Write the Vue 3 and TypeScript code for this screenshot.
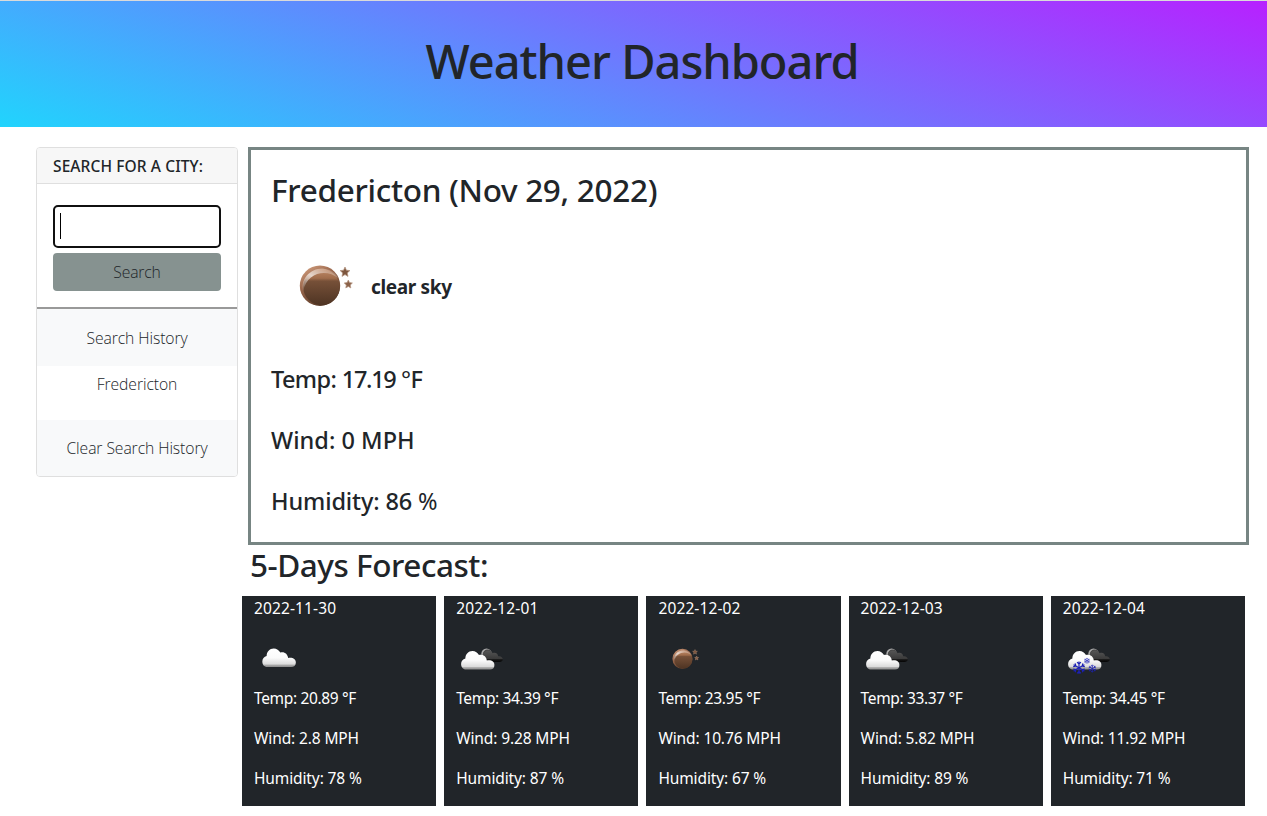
<script setup lang="ts">
import { ref } from 'vue'

type Icon = 'cloud' | 'clouds' | 'moon' | 'snow'
interface Day {
  date: string
  icon: Icon
  temp: string
  wind: string
  humidity: number
}

const city = ref('')
const history = ref<string[]>(['Fredericton'])
const days: Day[] = [
  { date: '2022-11-30', icon: 'cloud', temp: '20.89', wind: '2.8', humidity: 78 },
  { date: '2022-12-01', icon: 'clouds', temp: '34.39', wind: '9.28', humidity: 87 },
  { date: '2022-12-02', icon: 'moon', temp: '23.95', wind: '10.76', humidity: 67 },
  { date: '2022-12-03', icon: 'clouds', temp: '33.37', wind: '5.82', humidity: 89 },
  { date: '2022-12-04', icon: 'snow', temp: '34.45', wind: '11.92', humidity: 71 },
]
const arms = [0, 60, 120, 180, 240, 300]
const flakes = [
  [16, 31.8, 1],
  [24, 24.8, 0.46],
  [29.3, 32.6, 0.62],
]
</script>

<template>
  <svg class="defs" width="0" height="0" aria-hidden="true">
    <defs>
      <linearGradient id="moonFill" x1="0" y1="0" x2="0" y2="1">
        <stop offset="0" stop-color="#c08a68" />
        <stop offset="0.26" stop-color="#a06d4c" />
        <stop offset="0.34" stop-color="#765038" />
        <stop offset="1" stop-color="#4e3423" />
      </linearGradient>
      <linearGradient id="moonRim" x1="0" y1="0" x2="0.6" y2="1">
        <stop offset="0" stop-color="#dba887" />
        <stop offset="0.45" stop-color="#98654a" />
        <stop offset="1" stop-color="#553826" />
      </linearGradient>
      <linearGradient id="moonShine" x1="0" y1="1" x2="0.8" y2="0">
        <stop offset="0" stop-color="#fff" stop-opacity="0" />
        <stop offset="0.55" stop-color="#fff" stop-opacity="0.7" />
        <stop offset="1" stop-color="#fff" stop-opacity="0.1" />
      </linearGradient>
      <linearGradient id="cloudFill" x1="0" y1="0" x2="0" y2="1">
        <stop offset="0" stop-color="#fff" />
        <stop offset="0.5" stop-color="#fbfbfb" />
        <stop offset="0.84" stop-color="#dcdcdc" />
        <stop offset="0.9" stop-color="#a9a9a9" />
        <stop offset="1" stop-color="#8b8b8b" />
      </linearGradient>
      <linearGradient id="darkFill" x1="0" y1="0" x2="0" y2="1">
        <stop offset="0" stop-color="#555" />
        <stop offset="0.7" stop-color="#3b3b3b" />
        <stop offset="0.8" stop-color="#151515" />
        <stop offset="1" stop-color="#050505" />
      </linearGradient>
      <symbol id="moon" viewBox="0 0 100 100">
        <circle cx="49" cy="45.7" r="20.2" fill="url(#moonRim)" />
        <circle cx="50.4" cy="47" r="18.2" fill="url(#moonFill)" />
        <path d="M32 52C29 39 40 27.5 53 28.7C61 29.5 65.5 34 67 38C57 29.5 36 30.5 32 52Z" fill="url(#moonShine)" />
        <path d="M74 27l1.4 3.2 3.5.4-2.6 2.3.7 3.5-3-1.8-3 1.8.7-3.5-2.6-2.3 3.5-.4z" fill="#7d563e" stroke="#b2927e" stroke-width=".7" />
        <path d="M77.3 40l1.2 2.6 2.9.4-2.1 2 .5 2.9-2.5-1.4-2.5 1.4.5-2.9-2.1-2 2.9-.4z" fill="#8a6148" stroke="#b69783" stroke-width=".7" />
      </symbol>
      <symbol id="cloudShape" viewBox="0 0 35 20">
        <path d="M5.5 19.5C2 19.5 .3 16.8.3 13.8C.3 11 2.1 8.9 4.7 8.2C4.7 3.8 7.8.5 12 .5C15 .5 17.5 2.2 18.7 4.7C22.8 3.4 26.2 6 26.8 10.2C31.2 9.3 34.7 11.2 34.7 14.8C34.7 17.8 32.6 19.5 30 19.5Z" />
      </symbol>
    </defs>
  </svg>

  <header class="banner"><h1>Weather Dashboard</h1></header>

  <main class="layout">
    <aside class="sidebar">
      <h2 class="side-title">SEARCH FOR A CITY:</h2>
      <form class="search" @submit.prevent>
        <label class="field">
          <i class="caret" />
          <input v-model="city" type="text" aria-label="City" />
        </label>
        <button type="submit">Search</button>
      </form>
      <div class="band first">Search History</div>
      <ul class="history">
        <li v-for="h in history" :key="h">{{ h }}</li>
      </ul>
      <div class="band">Clear Search History</div>
    </aside>

    <section class="content">
      <article class="current">
        <h2 class="city">Fredericton (Nov 29, 2022)</h2>
        <div class="sky">
          <svg width="100" height="100"><use href="#moon" /></svg>
          <strong>clear sky</strong>
        </div>
        <h4 class="temp">Temp: <span class="num">17.19</span> <span class="deg">°</span>F</h4>
        <h4>Wind: 0 MPH</h4>
        <h4 class="hum">Humidity: 86 <span class="thin">%</span></h4>
      </article>

      <h2 class="forecast-title">5-Days Forecast:</h2>

      <div class="forecast">
        <article v-for="d in days" :key="d.date" class="day">
          <p class="date">{{ d.date }}</p>
          <svg class="icon" width="50" height="50" viewBox="0 0 50 50">
            <use v-if="d.icon === 'moon'" href="#moon" width="50" height="50" />
            <use v-else-if="d.icon === 'cloud'" href="#cloudShape" x="7.6" y="12" width="35" height="19.5" fill="url(#cloudFill)" />
            <template v-else>
              <circle cx="30.5" cy="17.8" r="5.2" fill="#aaa" />
              <circle cx="31.6" cy="18.4" r="4.8" fill="#444" />
              <path d="M27 26C25 20 27.5 14.5 32 14.5C34.2 14.5 36 15.6 36.6 17.2C39.6 16 42 17.8 42.1 20.2C44.8 19.8 46.8 21.2 46.8 23.3C46.8 25.1 45.2 26 43.5 26Z" fill="url(#darkFill)" />
              <use href="#cloudShape" x="4.8" y="14.5" width="34" height="19.5" fill="url(#cloudFill)" />
            </template>
            <g v-if="d.icon === 'snow'" fill="none" stroke="#1c20b4" stroke-width="1.15">
              <g v-for="(f, i) in flakes" :key="i" :transform="`translate(${f[0]} ${f[1]}) scale(${f[2]})`">
                <path v-for="a in arms" :key="a" :transform="`rotate(${a})`" d="M0 0V-6.3M-1.9-5.6L0-3.6L1.9-5.6" />
              </g>
            </g>
          </svg>
          <p class="t">Temp: {{ d.temp }} °F</p>
          <p class="w">Wind: {{ d.wind }} MPH</p>
          <p class="h">Humidity: {{ d.humidity }} %</p>
        </article>
      </div>
    </section>
  </main>
</template>

<style>
body {
  background: #fff;
  overflow: hidden;
}
#app {
  font-family: 'Noto Sans', 'Open Sans', sans-serif;
  font-size: 16px;
  line-height: 24px;
  color: #212529;
}
</style>

<style scoped>
* {
  box-sizing: border-box;
}
h1,
h2,
h4,
p,
ul {
  margin: 0;
  padding: 0;
  font-weight: 500;
}
.defs {
  display: block;
}
.banner {
  height: 127px;
  border-top: 1px solid #dadada;
  padding: 30px 0 0 17px;
  text-align: center;
  background: linear-gradient(19deg, #21d4fd 0%, #b721ff 100%) padding-box;
}
h1 {
  font-size: 47px;
  line-height: 60px;
  letter-spacing: -1px;
}
.layout {
  display: flex;
  align-items: flex-start;
  gap: 4px;
  padding: 20px 18px 0 36px;
}
.sidebar {
  width: 202px;
  flex: none;
  border: 1px solid #dfdfdf;
  border-radius: 4px;
  overflow: hidden;
  text-align: center;
  font-family: 'Open Sans', 'Noto Sans', sans-serif;
  font-size: 15.7px;
  font-weight: 300;
  letter-spacing: -0.08px;
}
.side-title {
  height: 36px;
  padding-left: 16px;
  border-bottom: 1px solid #dfdfdf;
  background: #f7f7f7;
  text-align: left;
  font: 500 15.5px/37px 'Noto Sans', sans-serif;
  letter-spacing: 0.1px;
}
.search {
  display: flex;
  flex-direction: column;
  gap: 5px;
  height: 125px;
  padding: 21px 16px 0;
  border-bottom: 2px solid #999;
}
.field {
  display: flex;
  align-items: center;
  height: 43px;
  padding: 0 5px;
  border: 2px solid #101010;
  border-radius: 5px;
}
.caret {
  width: 1px;
  height: 26px;
  flex: none;
  margin-top: -1px;
  background: #000;
}
input {
  width: 100%;
  min-width: 0;
  border: 0;
  outline: 0;
  padding: 0;
  background: none;
  font: inherit;
}
button {
  height: 38px;
  padding: 0;
  border: 0;
  border-radius: 4px;
  background: #869290;
  color: #212529;
  font: inherit;
  letter-spacing: -0.15px;
}
.band {
  height: 56px;
  line-height: 57px;
  background: #f8f9fa;
}
.first {
  height: 57px;
  line-height: 59px;
}
.history {
  height: 54px;
  padding-top: 6px;
  list-style: none;
  font-weight: 300;
}
.content {
  flex: 1;
  min-width: 0;
}
.current {
  height: 398px;
  margin-left: 6px;
  padding: 20px;
  border: 3px solid #778583;
}
.city {
  font-size: 31.5px;
  line-height: 40px;
  letter-spacing: -0.3px;
}
.sky {
  display: flex;
  align-items: center;
  height: 100px;
  margin: 30px 0 27px;
  font-size: 19px;
}
.sky svg {
  flex: none;
}
.sky strong {
  padding-bottom: 6px;
  letter-spacing: -0.34px;
}
h4 {
  height: 61px;
  font-size: 23.5px;
  line-height: 24px;
  letter-spacing: 0.03px;
}
.hum {
  letter-spacing: -0.13px;
}
.temp {
  letter-spacing: -0.6px;
}
.num {
  letter-spacing: -1.3px;
}
.deg,
.thin {
  font-weight: 400;
}
.forecast-title {
  margin-left: 8px;
  font-size: 31.5px;
  line-height: 40px;
  letter-spacing: -0.46px;
}
.forecast {
  display: grid;
  grid-template-columns: repeat(5, 1fr);
  gap: 8px;
  margin: 11px 4px 0 0;
}
.day {
  height: 210px;
  padding-left: 12px;
  background: #212529;
  color: #fff;
  font-size: 15.5px;
}
.day p {
  height: 40px;
  font-weight: 400;
}
.icon {
  display: block;
}
.date {
  letter-spacing: 0.13px;
}
.t {
  letter-spacing: -0.35px;
}
.w {
  letter-spacing: -0.12px;
}
.h {
  letter-spacing: -0.12px;
}
</style>
